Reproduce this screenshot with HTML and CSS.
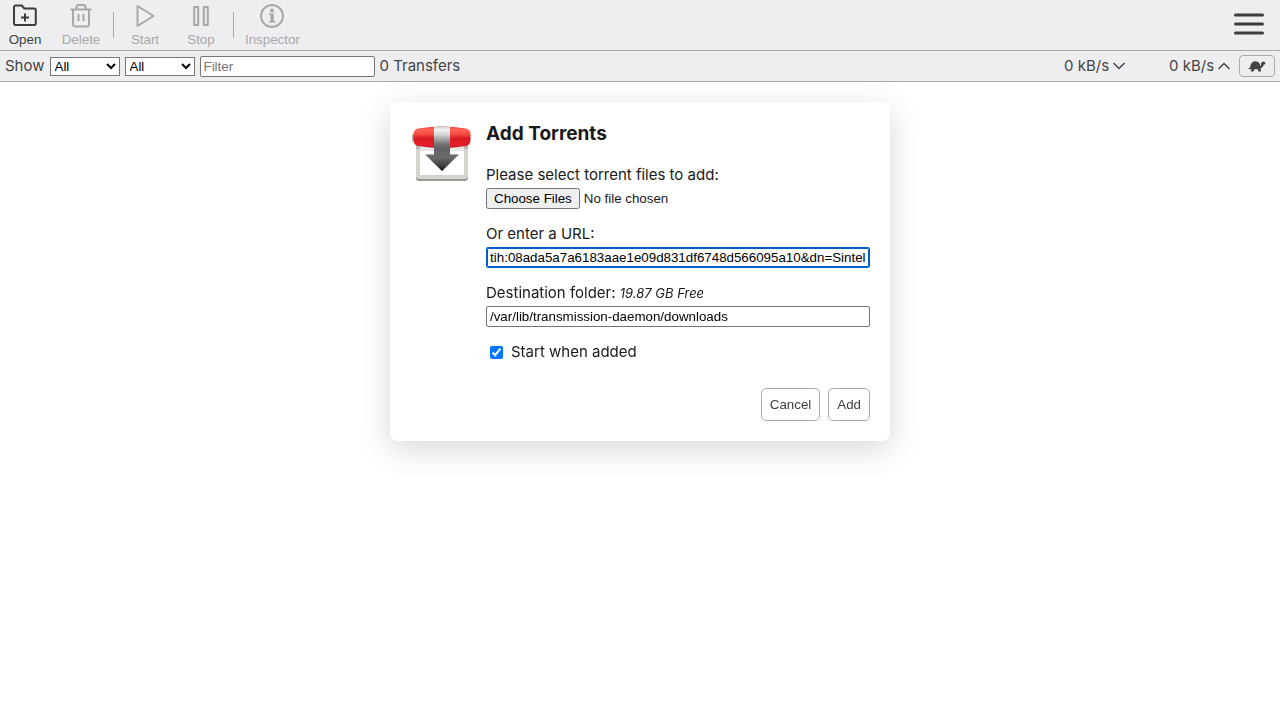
FILE: index.html
```html
<!DOCTYPE html>
<html lang="en">
<head>
<meta charset="utf-8">
<title>Transmission Web Interface</title>
<link rel="stylesheet" href="styles.css">
</head>
<body>
<header class="toolbar">
  <button class="tool" type="button">
    <svg class="tool-icon" viewBox="0 0 24 24"><path d="M2.800 1.500H8.800L11.300 4.500H21Q22.800 4.500 22.800 6.300V19.200Q22.800 21 21 21H2.800Q1 21 1 19.200V3.500Q1 1.500 2.800 1.500M12 9.500v8M8 13.500h8"/></svg>
    Open
  </button>
  <button class="tool" type="button" disabled>
    <svg class="tool-icon" viewBox="0 0 24 24"><path d="M1.500 5.500h21M4 5.500v14.500Q4 22.500 6.500 22.500h11Q20 22.500 20 20V5.500M7.500 5V3Q7.500 1 9.500 1h5Q16.500 1 16.500 3v2M9.500 10v7M14.500 10v7"/></svg>
    Delete
  </button>
  <span class="divider"></span>
  <button class="tool" type="button" disabled>
    <svg class="tool-icon" viewBox="0 0 24 24"><path d="M4.500 2v20L20.500 12z"/></svg>
    Start
  </button>
  <button class="tool" type="button" disabled>
    <svg class="tool-icon" viewBox="0 0 24 24"><path d="M5.200 3h4v18h-4zM14.800 3h4v18h-4z"/></svg>
    Stop
  </button>
  <span class="divider"></span>
  <button class="tool" type="button" disabled>
    <svg class="tool-icon" viewBox="0 0 24 24"><circle cx="12" cy="12" r="11"/><circle class="solid" cx="12" cy="6.500" r="2"/><path class="solid" d="M9 9.500h4.800v7.500H15.500v1.500H9V17h1.500v-6H9z"/></svg>
    Inspector
  </button>
  <button class="menu" type="button" aria-label="Menu">
    <svg class="menu-icon" viewBox="0 0 32 24"><path d="M2.500 3h27M2.500 12h27M2.500 21h27"/></svg>
  </button>
</header>
<section class="statusbar">
  <label for="filter-mode">Show</label>
  <select class="filter-select" id="filter-mode"><option>All</option></select>
  <select class="filter-select" aria-label="Tracker"><option>All</option></select>
  <input class="filter-text" type="search" placeholder="Filter" aria-label="Filter">
  <span>0 Transfers</span>
  <span class="speed speed-down">0 kB/s <svg class="chevron" viewBox="0 0 12 8"><path d="M.5 1L6 6.500 11.500 1"/></svg></span>
  <span class="speed">0 kB/s <svg class="chevron" viewBox="0 0 12 8"><path d="M.5 7L6 1.500 11.500 7"/></svg></span>
  <button class="turtle" type="button" aria-label="Alternative speed limits">
    <svg class="turtle-icon" viewBox="0 0 18 12"><path d="M0 9L2 7.500Q2.300 3.500 5 1.700 8 .5 10.500 2.200 12 3.500 12.500 6 13.500 5 13 3.500 13.300 1.500 15.500 1.500 17.300 1.500 17.500 3.200 17.400 4.500 15.800 4.800 15 7.800 12.700 8.300L13 11.500H10.300L9.800 9.300H6.300L5.500 11.500H3L3.300 9.300z"/></svg>
  </button>
</section>
<main class="stage">
  <form class="dialog" role="dialog" aria-labelledby="dialog-title">
    <svg class="logo" viewBox="0 0 64 64">
      <defs>
        <linearGradient id="red" x2="0" y2="1"><stop offset="0" stop-color="#f04438"/><stop offset=".15" stop-color="#ff6558"/><stop offset=".38" stop-color="#f04840"/><stop offset=".55" stop-color="#d91a22"/><stop offset=".85" stop-color="#e3202b"/><stop offset="1" stop-color="#b91520"/></linearGradient>
        <linearGradient id="band" x2="0" y2="1"><stop offset="0" stop-color="#ccc"/><stop offset=".15" stop-color="#f4f4f4"/><stop offset=".4" stop-color="#d0d0d0"/><stop offset=".8" stop-color="#777"/><stop offset="1" stop-color="#646468"/></linearGradient>
        <linearGradient id="arrow" x2="0" y2="1"><stop offset="0" stop-color="#646468"/><stop offset=".45" stop-color="#69696b"/><stop offset=".8" stop-color="#3b3b40"/><stop offset="1" stop-color="#08080f"/></linearGradient>
      </defs>
      <path d="M6 23h52v33q0 3-3 3H9q-3 0-3-3z" fill="#999a96"/>
      <path d="M6 23h52v31q0 3-3 3H9q-3 0-3-3z" fill="#d3d4ce"/>
      <path d="M10 24h44v29H10z" fill="#fff"/>
      <path d="M6 23h52v4H6z" fill="#b9b9b5"/>
      <path d="M10 23h44v6H10z" fill="#e7e7e8"/>
      <rect x="2" y="12" width="5" height="8" rx="2" fill="#aaa"/>
      <path d="M8 6.500Q32 2.500 56 6.500 60.500 7.500 60.500 12v6Q60.500 23 56 24 32 28 8 24 3.500 23 3.500 18v-6Q3.500 7.500 8 6.500z" fill="url(#red)"/>
      <path d="M24 4.500h16V26H24z" fill="url(#band)"/>
      <path d="M24 25h16v7.500h9L32 49 15 32.500h9z" fill="url(#arrow)"/>
    </svg>
    <div class="content">
      <h2 class="title" id="dialog-title">Add Torrents</h2>
      <div class="field">
        <label for="files">Please select torrent files to add:</label>
        <input class="file" id="files" type="file" multiple>
      </div>
      <div class="field">
        <label for="url">Or enter a URL:</label>
        <input class="text" id="url" type="text" spellcheck="false" value="magnet:?xt=urn:btih:08ada5a7a6183aae1e09d831df6748d566095a10&amp;dn=Sintel">
      </div>
      <div class="field">
        <label for="folder">Destination folder: <i class="free">19.87 GB Free</i></label>
        <input class="text" id="folder" type="text" spellcheck="false" value="/var/lib/transmission-daemon/downloads">
      </div>
      <div class="check-row">
        <input class="check" id="start" type="checkbox" checked>
        <label for="start">Start when added</label>
      </div>
      <div class="actions">
        <button class="action" type="button">Cancel</button>
        <button class="action" type="button">Add</button>
      </div>
    </div>
  </form>
</main>
<script src="script.js"></script>
</body>
</html>
```
FILE: styles.css
```css
* { box-sizing: border-box; }
body {
  min-height: 100vh;
  margin: 0;
  background: #fff;
  color: #1a1a1a;
  font: 15px/20px Inter, sans-serif;
}
button, input, select {
  margin: 0;
  font-family: "Liberation Sans", Arial, sans-serif;
}
svg { display: block; fill: none; stroke: currentColor; }
.toolbar {
  display: flex;
  align-items: center;
  gap: 6px;
  height: 51px;
  background: #eeeef0;
  border-bottom: 1px solid #aaa;
}
.tool {
  display: flex;
  flex-direction: column;
  align-items: center;
  gap: 4px;
  min-width: 50px;
  padding: 2px 5px 0;
  border: 0;
  background: none;
  color: #3d3d3d;
  line-height: 16px;
}
.tool:disabled { color: #a8a8aa; }
.tool-icon { width: 24px; height: 24px; stroke-width: 2; stroke-linejoin: round; }
.solid { fill: currentColor; stroke: none; }
.divider { width: 1px; height: 26px; margin-left: 1px; background: #aaa; }
.menu { margin-left: auto; padding: 0 15px 2px; border: 0; background: none; color: #3d3d3d; }
.menu-icon { width: 32px; height: 24px; stroke-width: 3; stroke-linecap: round; }
.statusbar {
  display: flex;
  align-items: center;
  gap: 5px;
  height: 31px;
  padding: 0 5px;
  background: #eeeef0;
  border-bottom: 1px solid #aaa;
  color: #444;
}
.filter-select {
  width: 70px;
  height: 19px;
  padding: 0;
  border: 1px solid #767676;
  border-radius: 0;
  background-color: #fff;
  color: #000;
}
.filter-text, .text {
  height: 21px;
  padding: 1px 3px;
  border: 1px solid #767676;
  border-radius: 2px;
  background: #fff;
  color: #000;
}
.filter-text { width: 175px; appearance: none; }
.speed { display: flex; align-items: center; justify-content: space-between; width: 61px; margin-right: 4px; white-space: nowrap; }
.speed-down { margin-left: auto; margin-right: 39px; }
.chevron { flex: none; width: 12px; height: 8px; stroke-width: 1.5; }
.turtle {
  display: grid;
  place-items: center;
  width: 36px;
  height: 22px;
  padding: 0;
  border: 1px solid #aaa;
  border-radius: 4px;
  background: none;
  color: #444;
}
.turtle-icon { width: 18px; height: 12px; fill: currentColor; stroke: none; }
.stage { padding: 20px; }
.dialog {
  display: flex;
  gap: 12px;
  max-width: 500px;
  margin: 0 auto;
  padding: 20px;
  border-radius: 8px;
  background: #fff;
  box-shadow: 0 8px 32px rgba(0, 0, 0, .16);
}
.logo { flex: none; width: 64px; height: 64px; stroke: none; }
.content { flex: 1; min-width: 0; }
.title { margin: 0 0 18px; font-size: 19px; line-height: 24px; }
.field { display: flex; flex-direction: column; margin-bottom: 14px; }
.field label { height: 24px; line-height: 22px; }
.file { height: 21px; }
.free { font-size: 13px; }
.text:focus { border-color: #005fcc; outline: 1px solid #005fcc; outline-offset: -2px; }
.check-row { display: flex; align-items: center; gap: 8px; margin-top: 15px; }
.check { width: 13px; height: 13px; margin-left: 4px; }
.actions { display: flex; justify-content: flex-end; gap: 8px; margin-top: 26px; }
.action {
  height: 33px;
  padding: 0 8px;
  border: 1px solid #aaa;
  border-radius: 5px;
  background: #fff;
  color: #3d3d3d;
}
```
FILE: script.js
```js
const url = document.getElementById('url');
url.focus();
url.setSelectionRange(url.value.length, url.value.length);
url.scrollLeft = url.scrollWidth;
```
